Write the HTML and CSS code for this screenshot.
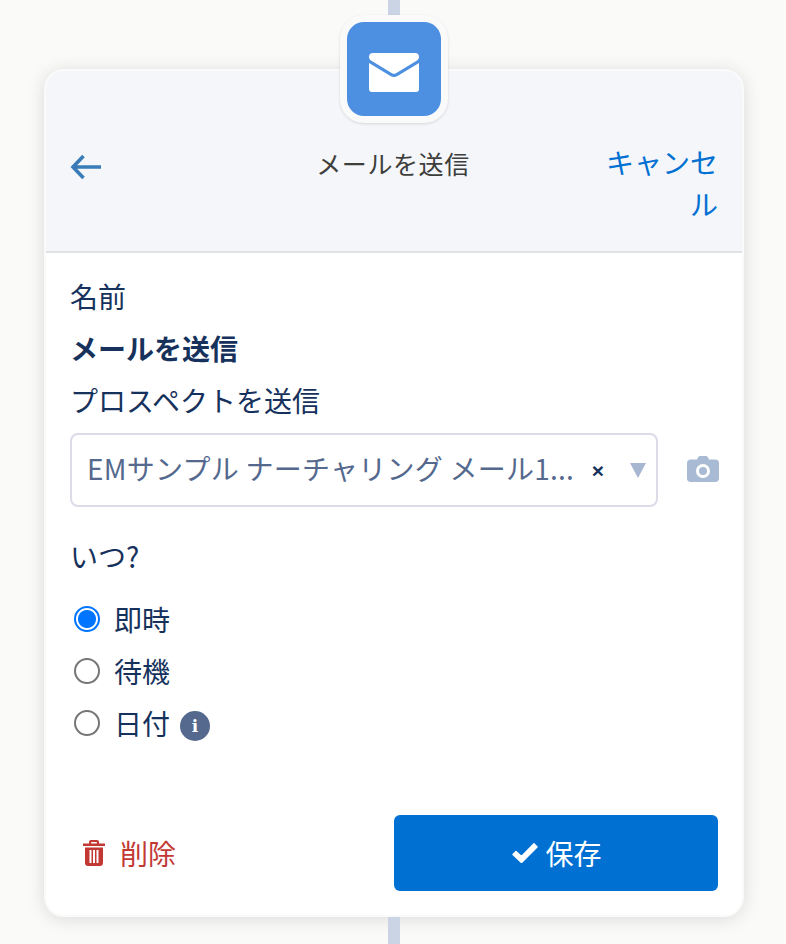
FILE: index.html
```html
<!DOCTYPE html>
<html lang="ja">
<head>
<meta charset="utf-8">
<title>メールを送信</title>
<link rel="stylesheet" href="styles.css">
</head>
<body>
<main class="stage">
  <div class="line line-top"></div>
  <div class="tile">
    <div class="tile-inner">
      <svg class="mail" viewBox="0 0 50 39" aria-hidden="true">
        <path d="M0 4a4 4 0 0 1 4-4h42a4 4 0 0 1 4 4c0 1.500-.8 2.600-2 3.400L27 20.200c-1.300.8-2.700.8-4 0L2 7.400C.8 6.600 0 5.500 0 4z" fill="#fff"/>
        <path d="M0 10V36a3 3 0 0 0 3 3h44a3 3 0 0 0 3-3V10L28.500 23c-2.200 1.300-4.800 1.300-7 0z" fill="#fff"/>
      </svg>
    </div>
  </div>
  <section class="card">
    <header class="head">
      <button class="back" aria-label="戻る">
        <svg viewBox="0 0 32 26" class="back-icon" aria-hidden="true"><path d="M13.500 2 3 13l10.500 11M3.500 13H31" fill="none" stroke="#3a7cb8" stroke-width="3.600"/></svg>
      </button>
      <h1 class="title">メールを送信</h1>
      <a class="cancel">キャンセル</a>
    </header>
    <div class="body">
      <div class="label">名前</div>
      <div class="name">メールを送信</div>
      <div class="label label-send">プロスペクトを送信</div>
      <div class="select-row">
        <div class="select">
          <span class="select-text">EMサンプル ナーチャリング メール1...</span>
          <span class="clear">×</span>
          <span class="caret"></span>
        </div>
        <svg class="camera" viewBox="0 0 32 26" aria-hidden="true">
          <path fill-rule="evenodd" d="M10 3.500 11 1.500C11.400.6 12 0 13 0h6c1 0 1.600.6 2 1.500l1 2h6.500C30.500 3.500 32 5 32 7v15.500c0 2-1.500 3.500-3.500 3.500h-25C1.500 26 0 24.500 0 22.500V7c0-2 1.500-3.500 3.500-3.500zM16 8a7 7 0 1 0 0 14 7 7 0 0 0 0-14zm0 3a4 4 0 1 1 0 8 4 4 0 0 1 0-8z" fill="#a9bbd4"/>
        </svg>
      </div>
      <div class="label label-when">いつ?</div>
      <div class="radios">
        <label class="radio"><span class="dot dot-on"></span><span>即時</span></label>
        <label class="radio"><span class="dot"></span><span>待機</span></label>
        <label class="radio"><span class="dot"></span><span>日付</span><span class="info">i</span></label>
      </div>
      <div class="actions">
        <a class="delete">
          <svg class="trash" viewBox="0 0 22 26" aria-hidden="true">
            <path fill-rule="evenodd" d="M8 0h6c1.200 0 2 .9 2 2v1.500h6V6H0V3.500h6V2c0-1.100.8-2 2-2zm.2 2v1.500h5.600V2zM2 7.500h18V23c0 1.700-1.300 3-3 3H5c-1.700 0-3-1.300-3-3zM6.500 10v13h2V10zm3.500 0v13h2V10zm3.500 0v13h2V10z" fill="#c23934"/>
          </svg>
          <span>削除</span>
        </a>
        <button class="save">
          <svg class="check" viewBox="0 0 26 20" aria-hidden="true"><path d="M1 11.500 4 8.500 9.500 13.500 22 .8 25 4 9.500 19.500z" fill="#fff" stroke="#fff" stroke-width="1.500" stroke-linejoin="round"/></svg>
          <span>保存</span>
        </button>
      </div>
    </div>
  </section>
  <div class="line line-bottom"></div>
</main>
</body>
</html>
```
FILE: styles.css
```css
* { box-sizing: border-box; }
html, body { margin: 0; height: 100%; }
body {
  background: #fafaf8;
  font-family: "Noto Sans CJK JP", "Noto Sans", sans-serif;
  color: #16325c;
  overflow: hidden;
}
.stage {
  height: 944px;
  padding-left: 2px;
  display: flex;
  flex-direction: column;
  align-items: center;
}
.line { width: 12px; background: #cbd4e5; flex: none; }
.line-top { height: 16px; margin-bottom: -1px; }
.line-bottom { flex: 1; }
.tile {
  width: 108px;
  height: 108px;
  padding: 7px;
  background: #fafafa;
  border-radius: 24px;
  margin-bottom: -54px;
  box-shadow: 0 1px 3px rgba(0, 0, 0, .12);
  position: relative;
  z-index: 2;
}
.tile-inner {
  width: 94px;
  height: 94px;
  background: #4d90e2;
  border-radius: 17px;
  display: flex;
  align-items: center;
  justify-content: center;
  padding-top: 7px;
}
.mail { width: 50px; height: 39px; }
.card {
  width: 700px;
  height: 848px;
  flex: none;
  background: #fff;
  border: 2px solid #fafafa;
  border-radius: 20px;
  box-shadow: 0 2px 18px rgba(0, 0, 0, .13);
  overflow: hidden;
  display: flex;
  flex-direction: column;
}
.head {
  height: 182px;
  flex: none;
  background: #f4f6fa;
  border-bottom: 2px solid #e1e2e6;
  display: flex;
  align-items: flex-start;
  padding: 70px 24px 0 24px;
}
.back {
  width: 34px;
  height: 48px;
  margin-top: 2px;
  padding: 0;
  border: 0;
  background: none;
  display: flex;
  align-items: center;
  flex: none;
}
.back-icon { width: 32px; height: 26px; }
.title {
  flex: 1;
  margin: 0;
  font-size: 25px;
  font-weight: 400;
  line-height: 44px;
  color: #3e3e3c;
  text-align: center;
  letter-spacing: .6px;
  padding-left: 76px;
  white-space: nowrap;
}
.cancel {
  width: 112px;
  flex: none;
  font-size: 28px;
  line-height: 42px;
  color: #0070d2;
  text-align: right;
  word-break: break-all;
}
.body {
  flex: 1;
  display: flex;
  flex-direction: column;
  padding: 22px 24px 24px 24px;
}
.label { font-size: 28px; line-height: 42px; color: #16325c; }
.name { font-size: 28px; line-height: 42px; margin-top: 10px; font-weight: 700; }
.label-send { margin-top: 10px; }
.select-row {
  display: flex;
  align-items: center;
  justify-content: space-between;
  margin-top: 12px;
}
.select {
  width: 588px;
  height: 74px;
  border: 2px solid #dddbe8;
  border-radius: 8px;
  display: flex;
  align-items: center;
  padding: 0 10px 4px 15px;
  background: #fff;
}
.select-text { font-size: 28px; letter-spacing: .25px; color: #54698d; white-space: nowrap; flex: 1; }
.clear { font-family: "Liberation Sans", sans-serif; font-size: 21px; font-weight: 700; color: #16325c; margin: 5px 26px 0 0; line-height: 1; }
.caret {
  width: 0;
  height: 0;
  margin-top: 4px;
  border-left: 8px solid transparent;
  border-right: 8px solid transparent;
  border-top: 15px solid #a8b7d1;
}
.camera { width: 32px; height: 26px; margin: 0 -1px 3px 0; }
.label-when { margin-top: 28px; }
.radios { display: flex; flex-direction: column; margin-top: 21px; gap: 10px; }
.radio { display: flex; align-items: center; height: 42px; font-size: 28px; }
.dot {
  width: 26px;
  height: 26px;
  border: 2px solid #767676;
  border-radius: 50%;
  margin: 0 14px 0 4px;
  flex: none;
}
.dot-on {
  border-color: #0075ff;
  background: radial-gradient(circle, #0075ff 0 8.500px, #fff 9.500px);
}
.info {
  width: 30px;
  height: 30px;
  border-radius: 50%;
  background: #54698d;
  color: #fff;
  font-family: "DejaVu Serif", serif;
  font-weight: 700;
  font-size: 17px;
  line-height: 30px;
  text-align: center;
  margin: 6px 0 0 10px;
}
.actions {
  margin-top: auto;
  display: flex;
  align-items: center;
  justify-content: space-between;
}
.delete {
  display: flex;
  align-items: center;
  gap: 15px;
  padding-left: 13px;
  font-size: 28px;
  color: #c23934;
}
.trash { width: 22px; height: 26px; }
.save {
  width: 324px;
  height: 76px;
  padding: 0 0 0 2px;
  border: 0;
  border-radius: 6px;
  background: #0070d2;
  color: #fff;
  font: inherit;
  font-size: 28px;
  display: flex;
  align-items: center;
  justify-content: center;
  gap: 7px;
}
.check { width: 26px; height: 20px; }
```
